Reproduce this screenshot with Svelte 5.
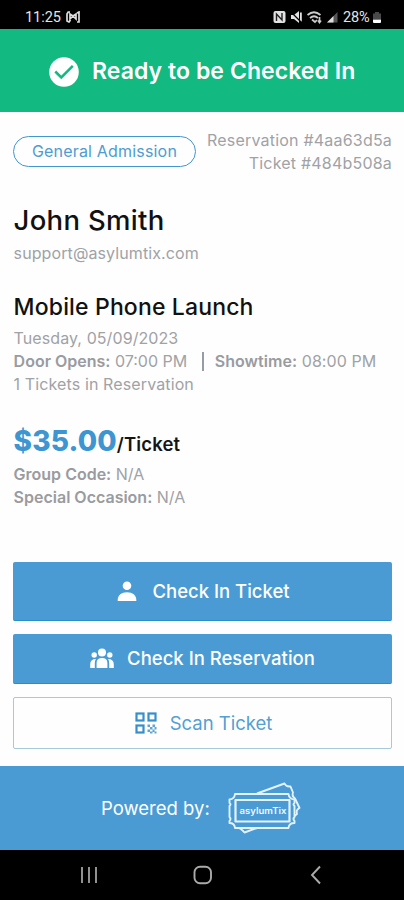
<script>
  const event = {
    title: 'Mobile Phone Launch',
    date: 'Tuesday, 05/09/2023',
    doors: '07:00 PM',
    show: '08:00 PM'
  };
</script>

<div class="phone">
  <header class="status">
    <span class="clock">11:25</span>
    <svg class="media" width="15" height="12" viewBox="0 0 15 12" fill="none" stroke="#ddd" stroke-width="1.700">
      <path d="M4 1H2.200L1 3v7l2 1 1.500-2M4 3v5l3-3 3 3V3L7 5zM11 2l2-1v10h-2M13 2v9" />
    </svg>
    <svg class="tray" width="67" height="14" viewBox="0 0 67 14">
      <rect x="0.500" y="1" width="12" height="12" rx="2" fill="#e2e2e2" />
      <path d="M3.500 11V4l5.500 6V3" fill="none" stroke="#222" stroke-width="1.400" />
      <path d="M18 5h3l5-4v12l-5-4h-3zM27 2.500h1.800v9H27z" fill="#e2e2e2" />
      <path d="M18 2l10 10" stroke="#000" stroke-width="1.300" />
      <g fill="none" stroke="#ccc" stroke-width="1.700">
        <path d="M34.500 5q6.500-5.500 13 0M37 8q4-3.500 8 0" />
        <path d="M39 9.500l3 2.500 2-2" />
        <path d="M46.500 7v5M45 10.500l1.500 2 1.500-2" />
      </g>
      <path d="M54 12.500L64.500 2v10.500z" fill="#555" />
      <path d="M54 12.500L60.500 6v6.500z" fill="#ddd" />
    </svg>
    <span class="percent">28%</span>
    <svg class="battery" width="10" height="14" viewBox="0 0 10 14">
      <path d="M3 2h4v1.500h2V9H1V3.500h2z" fill="#4a4a4a" />
      <path d="M1 9.500h8V12q0 1-1 1H2q-1 0-1-1z" fill="#fff" />
    </svg>
  </header>

  <section class="banner">
    <svg width="30" height="30" viewBox="0 0 30 30">
      <circle cx="15" cy="15" r="14.800" fill="#fff" />
      <path d="M6.300 14.500l6 6L23.800 8.800" fill="none" stroke="#12b981" stroke-width="2.500" />
    </svg>
    <h1>Ready to be Checked In</h1>
  </section>

  <main>
    <div class="top">
      <span class="pill">General Admission</span>
      <div class="ids">
        <span class="res">Reservation #4aa63d5a</span>
        <span class="tic">Ticket #484b508a</span>
      </div>
    </div>

    <div class="details">
      <h2 class="name">John Smith</h2>
      <p class="email">support@asylumtix.com</p>

      <h2 class="event">{event.title}</h2>
      <p class="date">{event.date}</p>
      <p class="times">
        <span class="door"><b>Door Opens:</b> {event.doors}</span>
        <i class="bar"></i>
        <span class="show"><b>Showtime:</b> {event.show}</span>
      </p>
      <p class="count">1 Tickets in Reservation</p>

      <div class="price"><span class="amount">$35.00</span><span class="unit">/Ticket</span></div>
      <p class="group"><b>Group Code:</b> N/A</p>
      <p class="occasion"><b>Special Occasion:</b> N/A</p>
    </div>

    <div class="actions">
      <button class="solid tall">
        <svg width="20" height="20" viewBox="0 0 20 20" fill="#fff">
          <circle cx="10" cy="4.800" r="4.300" />
          <path d="M0.700 20v-1C0.700 14 4.500 11.200 10 11.200S19.300 14 19.300 19v1z" />
        </svg>
        <span class="t1">Check In Ticket</span>
      </button>
      <button class="solid">
        <svg width="24" height="21" viewBox="0 0 24 21" fill="#fff">
          <circle cx="12" cy="4.500" r="4" />
          <circle cx="4.200" cy="7" r="2.700" />
          <circle cx="19.800" cy="7" r="2.700" />
          <path d="M6.600 20v-5q0-5 5.400-5t5.400 5v5zM0.200 20v-3.500q0-5.500 5.800-5.500-1.200 1.500-1.200 4v5zM23.800 20v-3.500q0-5.500-5.800-5.500 1.200 1.500 1.200 4v5z" />
        </svg>
        <span class="t2">Check In Reservation</span>
      </button>
      <button class="outline">
        <svg width="22" height="22" viewBox="0 0 22 22">
          <g fill="none" stroke="#368fca" stroke-width="2.200">
            <rect x="1.500" y="1.500" width="7" height="7" />
            <rect x="13.500" y="1.500" width="7" height="7" />
            <rect x="1.500" y="13.500" width="7" height="7" />
          </g>
          <path d="M12.500 12.500h2.500v2.500h-2.500zM17.500 12.500H20v2.500h-2.500zM15 15h2.500v2.500H15zM19.500 15h2v2.500h-2zM12.500 17.500H15V20h-2.500zM17.500 17.500h2V20h-2zM15 19.500h2.500v2H15zM19.500 19.500h2v2h-2z" fill="#368fca" opacity=".8" />
        </svg>
        <span class="t3">Scan Ticket</span>
      </button>
    </div>
  </main>

  <footer>
    <span class="powered">Powered by:</span>
    <svg width="76" height="54" viewBox="0 0 76 54" fill="none" stroke="#e3f3fd" stroke-width="1.900" stroke-linejoin="round">
      <path d="M30 12.500L57.500 2.500Q59 6 63.500 5.500L66 11.500Q64.500 15 68 17.500L72.500 27Q68.500 29 70 33L67.500 35" />
      <path d="M9 47Q13 46 17.500 51.500L30 47" />
      <path d="M8 13H61.500Q62 18 67.500 18.500V22Q65.500 23 67.500 25V36Q65.500 38 67.500 40V42Q62 42 61.500 47H8Q7.500 42 2.500 42V40Q4.500 38 2.500 36V25Q4.500 23 2.500 22V18.500Q7.500 18 8 13z" />
      <rect x="8.500" y="19" width="54" height="21.500" stroke-width="2.200" />
      <text x="36" y="32.700" text-anchor="middle" textLength="47" lengthAdjust="spacingAndGlyphs" fill="#eef8ff" stroke="none" font-family="Inter, sans-serif" font-size="8.500" font-weight="600">asylumTix</text>
    </svg>
  </footer>

  <nav>
    <svg width="18" height="18" viewBox="0 0 18 18" stroke="#aaa" stroke-width="1.700"><path d="M2 1v16M9 1v16M16 1v16" /></svg>
    <svg width="20" height="20" viewBox="0 0 20 20" fill="none" stroke="#aaa" stroke-width="1.900"><rect x="1.500" y="1.800" width="16.500" height="16.500" rx="5.500" /></svg>
    <svg width="12" height="20" viewBox="0 0 12 20" fill="none" stroke="#aaa" stroke-width="1.900"><path d="M10 1.500L2 10l8 8.500" /></svg>
  </nav>
</div>

<style>
  :global(body) { margin: 0; background: #fff; }
  .phone {
    width: 404px; height: 900px; display: flex; flex-direction: column; overflow: hidden;
    background: #fefefe; color: #a0a2a6; font-family: Inter, sans-serif; font-size: 16px;
  }
  h1, h2, p { margin: 0; font-weight: 400; white-space: nowrap; }
  span { white-space: nowrap; }
  .status {
    height: 28.500px; flex: none; box-sizing: border-box; padding: 6px 25px 0 25px; background: #000; color: #e4e4e4;
    display: flex; align-items: center; font-family: Roboto, sans-serif; font-size: 14.500px;
  }
  .clock { width: 40.500px; letter-spacing: -0.050px; }
  .tray { margin-left: auto; }
  .percent { width: 29px; margin-left: 3px; letter-spacing: -0.100px; }
  .battery { margin-right: -3px; }
  .banner {
    height: 83px; flex: none; background: #12b981; color: #fff; display: flex; align-items: center;
    box-sizing: border-box; padding: 3px 0 0 49px; gap: 13px;
  }
  h1 { font-size: 23px; font-weight: 600; line-height: 30px; padding-bottom: 2px; letter-spacing: 0.070px; }
  main { flex: 1; display: flex; flex-direction: column; padding: 0 12px 0 13px; }
  .top { display: flex; justify-content: space-between; padding-top: 18px; height: 48px; }
  .pill {
    box-sizing: border-box; width: 183px; height: 31px; margin-top: 6px; border: 1.500px solid #4396d0; border-radius: 16px;
    color: #4f9cd2; font-size: 16px; line-height: 29px; text-align: center; letter-spacing: 0.180px;
  }
  .ids { display: flex; flex-direction: column; align-items: flex-end; line-height: 23px; margin-top: -1px; letter-spacing: 0.200px; }
  .details { padding-left: 0.600px; }
  .name { color: #111; font-size: 27.500px; font-weight: 500; line-height: 34px; margin-top: 25px; letter-spacing: 0.300px; }
  p { line-height: 23px; height: 23px; }
  .email { margin-top: 5px; letter-spacing: 0.100px; }
  .event { color: #111; font-size: 23px; font-weight: 500; line-height: 30px; margin-top: 27px; letter-spacing: 0.150px; }
  .date { margin-top: 5px; letter-spacing: 0.080px; }
  .times { display: flex; align-items: center; }
  .show { letter-spacing: 0.060px; }
  .count { letter-spacing: 0.120px; }
  .bar { width: 1.500px; height: 19px; background: #999ca2; margin: 0 11px 0 15px; }
  b { font-weight: 600; color: #999ba0; }
  .price { display: flex; align-items: baseline; height: 36px; margin-top: 27px; line-height: 36px; }
  .amount { color: #3d95d1; font-size: 28px; font-weight: 800; letter-spacing: 0.150px; }
  .unit { color: #151515; font-size: 18.500px; font-weight: 600; letter-spacing: 0.150px; }
  .group { margin-top: 4px; }
  .actions { display: flex; flex-direction: column; gap: 13px; margin-top: 53px; }
  button {
    box-sizing: border-box; width: 379px; height: 50px; padding: 0; border: 0; border-radius: 2px; display: flex;
    align-items: center; justify-content: center; font-family: inherit; font-size: 18.500px; font-weight: 500;
  }
  .solid { background: #4a9bd4; color: #fff; border-bottom: 1px solid #288dcc; gap: 13px; }
  .tall { height: 59px; gap: 15px; padding-left: 2px; }
  .outline { height: 52px; background: #fefefe; border: 1px solid #a9c7dd; color: #559fd2; font-weight: 400; gap: 13px; padding-left: 2px; }
  footer {
    height: 84px; flex: none; background: #4a9bd4; color: #fff; display: flex; align-items: center;
    padding-left: 101px; font-size: 18.500px;
  }
  .powered { width: 126px; }
  nav { height: 50px; flex: none; background: #000; display: flex; align-items: center; padding-left: 80px; }
  nav svg:nth-child(2) { margin-left: 95px; }
  nav svg:nth-child(3) { margin-left: 97px; }
</style>
